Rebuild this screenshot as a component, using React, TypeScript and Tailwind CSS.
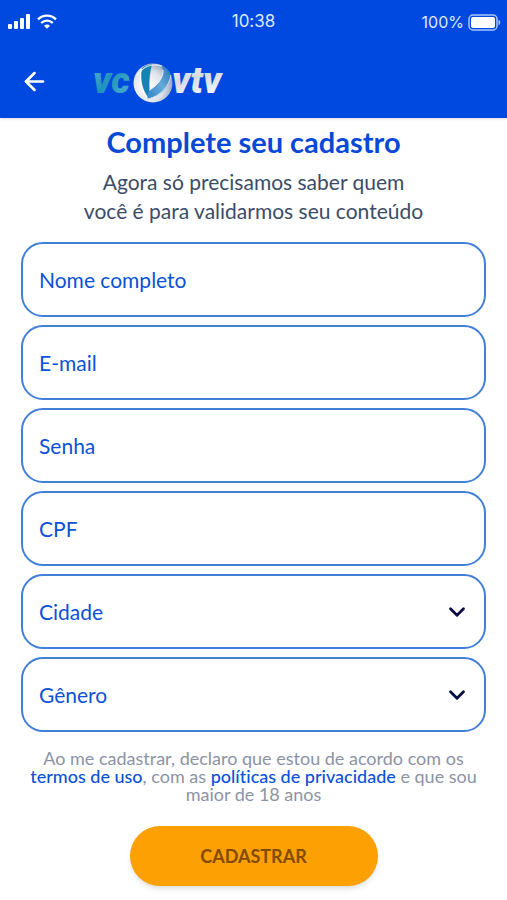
import { useState } from 'react';
import type { FormEvent } from 'react';
import { ArrowLeft, ChevronDown } from 'lucide-react';

const fields = [
  { id: 'nome', label: 'Nome completo', type: 'text' },
  { id: 'email', label: 'E-mail', type: 'email' },
  { id: 'senha', label: 'Senha', type: 'password' },
  { id: 'cpf', label: 'CPF', type: 'text' },
];

const selects = [
  { id: 'cidade', label: 'Cidade', options: ['Santos', 'Campinas', 'Guarujá', 'Piracicaba'] },
  { id: 'genero', label: 'Gênero', options: ['Feminino', 'Masculino', 'Outro'] },
];

const fieldClass =
  'block h-[75px] w-full rounded-[22px] border-2 border-[#427fd9] bg-white px-4 text-[21px] text-[#0b52d6] outline-none placeholder:text-[#0b52d6] placeholder:opacity-100 focus:border-[#0049e0]';

function StatusBar() {
  return (
    <div className="grid h-11 grid-cols-3 items-center px-[6px] font-['Inter',sans-serif] text-[17px] text-[#dce8ff]">
      <div className="flex items-center gap-[6px] pl-[2px]">
        <svg width="23" height="16" viewBox="0 0 23 16" fill="#fff" aria-hidden="true">
          <rect x="0" y="10" width="4" height="5" rx="1" />
          <rect x="6" y="7" width="4" height="8" rx="1" />
          <rect x="12" y="4" width="4" height="11" rx="1" />
          <rect x="18" y="0" width="4" height="15" rx="1" />
        </svg>
        <svg width="20" height="16" viewBox="0 0 20 16" fill="none" stroke="#fff" strokeWidth="2.3" aria-hidden="true">
          <path d="M1 5.4C6 .3 14 .3 19 5.4" />
          <path d="M4.2 9c3.3-3.2 8.3-3.2 11.6 0" />
          <path d="M7 11.8c1.7-1.6 4.3-1.6 6 0l-3 3z" fill="#fff" stroke="none" />
        </svg>
      </div>
      <span className="text-center">10:38</span>
      <div className="flex items-center justify-end gap-1">
        <span className="text-[16px]">100%</span>
        <svg width="33" height="17" viewBox="0 0 33 17" aria-hidden="true">
          <rect x="1" y="1" width="28" height="15" rx="4" fill="none" stroke="#a9c6ff" strokeWidth="1.5" />
          <rect x="3" y="3" width="24" height="11" rx="2" fill="#fff" />
          <path d="M30.5 5.8c2.4.8 2.4 4.600 0 5.400z" fill="#a9c6ff" />
        </svg>
      </div>
    </div>
  );
}

function Logo() {
  return (
    <svg width="140" height="50" viewBox="0 0 140 50" role="img" aria-label="VC VTV">
      <defs>
        <linearGradient id="teal" x1="0" y1="0" x2="1" y2="1">
          <stop offset="0" stopColor="#62b4d2" />
          <stop offset="0.45" stopColor="#1f93bd" />
          <stop offset="1" stopColor="#58b4cf" />
        </linearGradient>
        <linearGradient id="silver" x1="0" y1="0" x2="0.3" y2="1">
          <stop offset="0" stopColor="#ffffff" />
          <stop offset="0.5" stopColor="#d5dbe4" />
          <stop offset="1" stopColor="#f4f5f7" />
        </linearGradient>
        <radialGradient id="sphere" cx="0.35" cy="0.6" r="0.7">
          <stop offset="0" stopColor="#ffffff" />
          <stop offset="0.6" stopColor="#dfe3ea" />
          <stop offset="1" stopColor="#8a9bb8" />
        </radialGradient>
        <linearGradient id="ribbon" x1="1" y1="0" x2="0" y2="1">
          <stop offset="0" stopColor="#2670b4" />
          <stop offset="0.5" stopColor="#66aadb" />
          <stop offset="1" stopColor="#2f86c4" />
        </linearGradient>
      </defs>
      <g fontFamily="Roboto, sans-serif" fontStyle="italic" fontWeight="900">
        <text x="4" y="37" fontSize="37" fill="url(#teal)">vc</text>
        <text x="83" y="37" fontSize="37" fill="url(#silver)">vtv</text>
      </g>
      <circle cx="64" cy="27" r="19.5" fill="url(#sphere)" />
      {/* folded ribbon over the sphere */}
      <path d="M53 12c3-2 6-3.500 10-3.500-2 7-3 16-2.500 25L59 41c-6-8-8-18-6-29z" fill="#1682b3" />
      <path d="M70 9c6 1 10 5 12 10-1 12-10 21-23 24-1-3-1-6 1.500-9C68 30 75 21 74 14c-1-2-2-4-4-5z" fill="url(#ribbon)" />
      <path d="M82 19C80 31 71 40 59 43" fill="none" stroke="#e8eef6" strokeOpacity="0.8" strokeWidth="1" />
      <path d="M74 14c1 7-6 16-13.500 20" fill="none" stroke="#fff" strokeOpacity="0.8" strokeWidth="1" />
      <path d="M48 20c5-9 14-13 25-10" fill="none" stroke="#fff" strokeOpacity="0.7" strokeWidth="1.4" />
      <path d="M52 13c-2 11 0 21 6 29" fill="none" stroke="#fff" strokeOpacity="0.8" strokeWidth="1" />
    </svg>
  );
}

export default function App() {
  const [values, setValues] = useState<Record<string, string>>({});

  const update = (id: string, value: string) => {
    setValues((prev) => ({ ...prev, [id]: value }));
  };

  const handleSubmit = (e: FormEvent) => {
    e.preventDefault();
  };

  return (
    <div className="min-h-screen bg-white font-['Lato',sans-serif] [font-variant-ligatures:none]">
      <header className="bg-[#0049e0] shadow-sm">
        <StatusBar />
        <div className="flex h-[74px] items-center px-5">
          <button type="button" aria-label="Voltar" className="text-white">
            <ArrowLeft size={29} strokeWidth={2.2} />
          </button>
          <div className="ml-10">
            <Logo />
          </div>
        </div>
      </header>

      <main className="px-[21px] pt-2">
        <h1 className="text-center text-[29px] leading-8 font-bold text-[#0749d5]">Complete seu cadastro</h1>
        <p className="mt-[9px] text-center text-[21px] leading-[29px] text-[#3b4c69]">
          Agora só precisamos saber quem
          <br />
          você é para validarmos seu conteúdo
        </p>

        <form onSubmit={handleSubmit} className="mt-[17px]">
          <div className="flex flex-col gap-2">
            {fields.map((field) => (
              <input
                key={field.id}
                id={field.id}
                type={field.type}
                placeholder={field.label}
                aria-label={field.label}
                value={values[field.id] ?? ''}
                onChange={(e) => update(field.id, e.target.value)}
                className={fieldClass}
              />
            ))}
            {selects.map((select) => (
              <div key={select.id} className="relative">
                <select
                  id={select.id}
                  aria-label={select.label}
                  value={values[select.id] ?? ''}
                  onChange={(e) => update(select.id, e.target.value)}
                  className={`${fieldClass} appearance-none`}
                >
                  <option value="">{select.label}</option>
                  {select.options.map((option) => (
                    <option key={option} value={option}>
                      {option}
                    </option>
                  ))}
                </select>
                <ChevronDown
                  size={26}
                  strokeWidth={2.6}
                  className="pointer-events-none absolute inset-y-0 right-4 my-auto text-[#0c0d45]"
                />
              </div>
            ))}
          </div>

          <p className="mx-auto mt-[17px] max-w-[450px] text-center text-[18px] leading-[18px] text-[#8c93a5]">
            Ao me cadastrar, declaro que estou de acordo com os{' '}
            <a href="#termos" className="font-medium text-[#0b52d6]">termos de uso</a>, com as{' '}
            <a href="#privacidade" className="font-medium text-[#0b52d6]">políticas de privacidade</a> e que sou maior de 18 anos
          </p>

          <button
            type="submit"
            className="mx-auto mt-[23px] block h-[60px] w-[248px] rounded-full bg-[#fda004] text-[18px] font-bold text-[#844b00] shadow-md"
          >
            CADASTRAR
          </button>
        </form>
      </main>
    </div>
  );
}
